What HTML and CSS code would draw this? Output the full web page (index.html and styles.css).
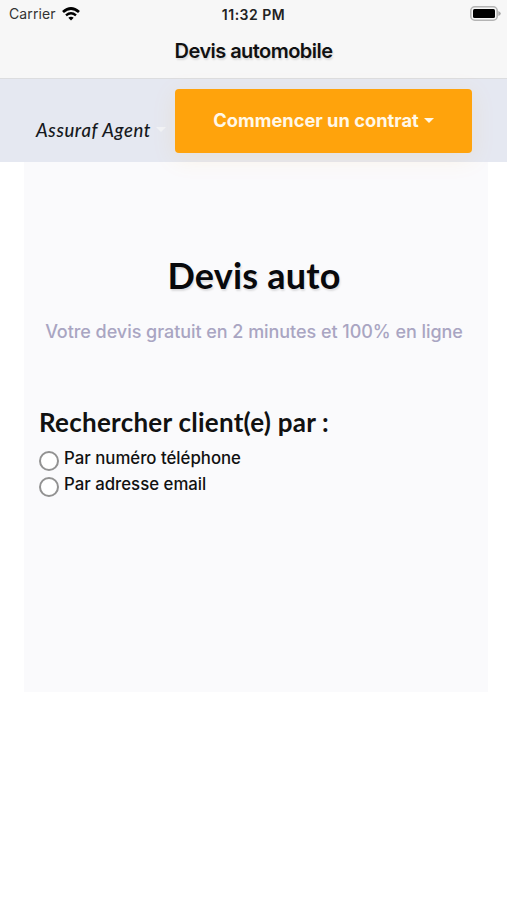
FILE: index.html
```html
<!DOCTYPE html>
<html lang="fr">

<head>
    <meta charset="UTF-8">
    <title>Devis automobile</title>
    <link rel="stylesheet" href="styles.css">
</head>

<body>
    <header class="app-header">
        <div class="status-bar">
            <div class="carrier">
                <span class="carrier-name">Carrier</span>
                <svg class="wifi" width="18" height="14" viewBox="0 0 18 14">
                    <path d="M1 5 Q9 -2 17 5" fill="none" stroke="#000" stroke-width="2.8" />
                    <path d="M4 8.3 Q9 4 14 8.3" fill="none" stroke="#000" stroke-width="2.4" />
                    <path d="M6.3 10.8 Q9 8.6 11.7 10.8 L9 13.6 Z" fill="#000" />
                </svg>
            </div>
            <span class="clock">11:32 PM</span>
            <svg class="battery" width="31" height="15" viewBox="0 0 31 15">
                <rect x="0.8" y="0.8" width="26.4" height="13.4" rx="4" fill="#f7f7f7" stroke="#b4b4b4" stroke-width="1.6" />
                <rect x="3" y="3" width="22" height="9" rx="1.5" fill="#000" />
                <path d="M28.3 5 Q30.8 6 30.8 7.5 Q30.8 9 28.3 10 Z" fill="#a9a9a9" />
            </svg>
        </div>
        <div class="page-title"><span>Devis automobile</span></div>
    </header>

    <nav class="navbar">
        <a class="agent" href="#"><span>Assuraf Agent</span><i class="caret"></i></a>
        <button class="btn-contrat" type="button"><span>Commencer un contrat</span><i class="caret"></i></button>
    </nav>

    <main class="devis">
        <h1><span>Devis auto</span></h1>
        <p class="subtitle"><span>Votre devis gratuit en 2 minutes et 100% en ligne</span></p>
        <form>
            <h2><span>Rechercher client(e) par :</span></h2>
            <label class="choice">
                <input type="radio" name="recherche" value="telephone">
                <span>Par numéro téléphone</span>
            </label>
            <label class="choice">
                <input type="radio" name="recherche" value="email">
                <span>Par adresse email</span>
            </label>
        </form>
    </main>
</body>

</html>
```
FILE: styles.css
```css
* {
    box-sizing: border-box;
}

body {
    margin: 0;
    background-color: #fff;
    color: #111;
    font-family: Inter, "Liberation Sans", sans-serif;
}

.app-header {
    height: 79px;
    background-color: #f7f7f7;
    border-bottom: 1px solid #dcdddf;
}

.status-bar {
    display: grid;
    grid-template-columns: 1fr auto 1fr;
    align-items: center;
    height: 28px;
    padding: 0 6px 0 9px;
}

.carrier {
    display: flex;
    align-items: center;
    gap: 6px;
    color: #333;
    font-size: 14px;
    line-height: 16px;
    padding-bottom: 1px;
}

.carrier-name {
    letter-spacing: 0.1px;
}

.clock {
    margin-left: -3px;
    font-size: 14px;
    font-weight: 600;
    letter-spacing: 0.5px;
    color: #222;
}

.battery {
    justify-self: end;
    margin-top: -2px;
}

.page-title {
    height: 46px;
    line-height: 46px;
    text-align: center;
    font-size: 20px;
    font-weight: 600;
    letter-spacing: -0.55px;
    text-shadow: 1px 2px 2px rgba(0, 0, 0, 0.12);
}

.navbar {
    display: flex;
    align-items: flex-start;
    height: 83px;
    padding: 10px 35px 0 36px;
    background-color: #e5e8f1;
}

.agent {
    display: flex;
    align-items: center;
    gap: 5px;
    width: 139px;
    height: 81px;
    color: #151820;
    font-family: Lato, sans-serif;
    font-size: 18.5px;
    font-style: italic;
    font-weight: 500;
    letter-spacing: 0.6px;
    text-decoration: none;
    white-space: nowrap;
}

.caret {
    border-top: 5px solid #f1f3f7;
    border-left: 5px solid transparent;
    border-right: 5px solid transparent;
}

.btn-contrat {
    display: flex;
    align-items: center;
    justify-content: center;
    gap: 5px;
    width: 297px;
    height: 64px;
    padding: 0 0 2px;
    border: none;
    border-radius: 4px;
    background-color: #ffa30c;
    box-shadow: 0 5px 24px rgba(255, 163, 12, 0.1);
    color: #fff8e8;
    font-family: inherit;
    font-size: 18.3px;
    font-weight: 700;
    white-space: nowrap;
}

.btn-contrat .caret {
    border-top-color: #fff8e8;
}

.devis {
    height: 530px;
    margin: 0 19px 0 24px;
    padding: 90px 19px 0 15px;
    background-color: #fafafc;
}

h1 {
    margin: 0;
    height: 46px;
    line-height: 46px;
    text-align: center;
    font-family: Lato, sans-serif;
    font-size: 36px;
    font-weight: 700;
    letter-spacing: 0.2px;
    color: #08090c;
    text-shadow: 1px 2px 2px rgba(0, 0, 0, 0.12);
}

.subtitle {
    margin: 22px 0 0;
    height: 24px;
    line-height: 24px;
    text-align: center;
    font-size: 18px;
    font-weight: 500;
    letter-spacing: -0.05px;
    color: #a9a5c2;
    white-space: nowrap;
}

h2 {
    margin: 60px 0 5px;
    height: 36px;
    line-height: 36px;
    font-family: Lato, sans-serif;
    font-size: 26px;
    font-weight: 700;
    letter-spacing: 0.25px;
    white-space: nowrap;
}

.choice {
    display: flex;
    align-items: flex-start;
    gap: 5px;
    height: 26px;
    font-size: 16.8px;
    font-weight: 500;
    line-height: 26px;
}

.choice input {
    appearance: none;
    width: 20px;
    height: 20px;
    margin: 6px 0 0;
    border: 2px solid #929292;
    border-radius: 50%;
    background-color: #fff;
}
```
